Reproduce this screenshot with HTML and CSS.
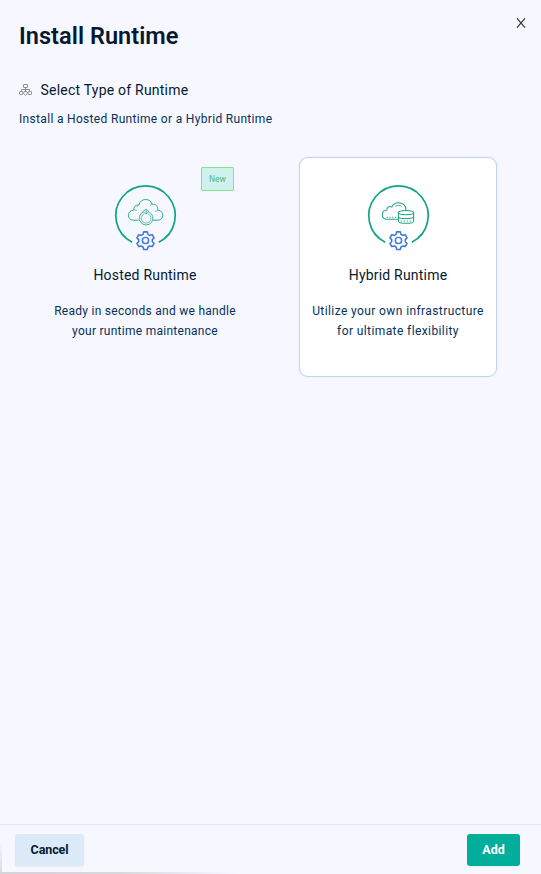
FILE: index.html
```html
<!DOCTYPE html>
<html lang="en">
<head>
<meta charset="utf-8">
<title>Install Runtime</title>
<link rel="stylesheet" href="styles.css">
</head>
<body>
<svg width="0" height="0" class="defs">
  <defs>
    <g id="frame">
      <path d="M27.2 67.2A29.7 29.7 0 1 1 53.8 67.2" fill="none" stroke="#12a584" stroke-width="1.7"/>
      <g transform="translate(40.5 65.5) scale(.92)">
        <path d="M-2-9.4h4l.7 2.7 2 1.1 2.6-.7 2 3.4-1.9 1.9v2.3l1.9 1.9-2 3.4-2.6-.7-2 1.1-.7 2.7h-4l-.7-2.7-2-1.1-2.6.7-2-3.4 1.9-1.9v-2.3l-1.9-1.9 2-3.4 2.6.7 2-1.1z" fill="none" stroke="#3f78d8" stroke-width="1.7" stroke-linejoin="round"/>
        <circle r="3.4" fill="none" stroke="#3f78d8" stroke-width="1.6"/>
      </g>
    </g>
  </defs>
</svg>
<div class="panel">
  <header class="header">
    <h1 class="title">Install Runtime</h1>
    <button class="close" aria-label="Close"><svg width="10" height="10" viewBox="0 0 10 10"><path d="M1 .3L9 9.7M9 .3L1 9.7" stroke="#2c3c4d" stroke-width="1.15"/></svg></button>
  </header>
  <main class="content">
    <h2 class="subtitle">
      <svg width="13" height="12" viewBox="0 0 13 12" fill="none" stroke="#858e9b" stroke-width="1"><rect x="4.5" y=".5" width="4" height="3" rx=".4"/><rect x=".5" y="7.5" width="3.4" height="3" rx=".6"/><rect x="9.1" y="7.5" width="3.4" height="3" rx=".6"/><path d="M5.3 7.5h2.4l.8 1.8-2 2-2-2zM6.5 3.5v4M2.5 7.5v-2h8v2"/></svg>
      <span>Select Type of Runtime</span>
    </h2>
    <p class="intro">Install a Hosted Runtime or a Hybrid Runtime</p>
    <div class="cards">
      <section class="card">
        <span class="badge">New</span>
        <svg class="art" width="80" height="80" viewBox="0 0 80 80">
          <use href="#frame"/>
          <g fill="none" stroke="#2aae90" stroke-width="1" stroke-linecap="round">
            <path d="M33.2 45.2H28.5C25.2 45.2 23.4 43 23.4 40.3c0-3 2.2-5 5.3-5.2-.2-3.2 1.8-5.3 5.2-5.2 1-3.5 3.5-5.4 6.7-5.4 3.4 0 5.6 1.8 6.5 4.7 4-.4 6 2.2 5.7 6.1 3.3.2 5 2.3 5 5 0 2.8-2 4.9-5 4.9h-4.3"/>
            <path d="M29.5 34.8l1.8.5M32 31.6l1.2-.9M46.5 29.5l-1 .7M52 35.7l-1.8.6" stroke-width=".7"/>
            <path d="M37.8 37a6.9 6.9 0 1 0 6.6 0" stroke-width=".9"/>
            <path d="M38.7 38.9a4.9 4.9 0 1 0 4.8 0" stroke-width=".7"/>
            <path d="M38.2 36.3l2.9-2.2 2.9 2.3-2.7 2.5zM41.1 34.5v4.2" stroke-width=".8"/>
          </g>
        </svg>
        <h3 class="name hosted">Hosted Runtime</h3>
        <p class="text ready">Ready in seconds and we handle<br>your runtime maintenance</p>
      </section>
      <section class="card selected">
        <svg class="art" width="80" height="80" viewBox="0 0 80 80">
          <use href="#frame"/>
          <g fill="none" stroke="#20a486" stroke-width="1.05" stroke-linecap="round">
            <path d="M39.5 44.2H29c-3.1 0-4.7-2-4.7-4.5 0-2.7 1.7-4.4 4.4-4.5.3-3.1 2.5-4.3 5.1-3.2 1.2-2.8 3.5-4.2 6.5-4.2 4.7 0 7.5 2.7 7.8 7.3"/>
            <path d="M37.3 31.2c2-1.4 4.8-1.3 6.2.4" stroke-width=".8"/>
            <path d="M29 42.3h10" stroke-dasharray=".5 2.3" stroke-width="1"/>
            <ellipse cx="48" cy="37.6" rx="7.6" ry="2.1" fill="#fff"/>
            <path d="M40.4 37.6v8.6c0 2.7 15.2 2.7 15.2 0v-8.6M40.4 41.7c0 2.5 15.2 2.5 15.2 0"/>
            <path d="M43 45.9h10" stroke-dasharray=".5 2.5"/>
          </g>
        </svg>
        <h3 class="name hybrid">Hybrid Runtime</h3>
        <p class="text utilize">Utilize your own infrastructure<br>for ultimate flexibility</p>
      </section>
    </div>
  </main>
  <footer class="footer">
    <button class="btn cancel">Cancel</button>
    <button class="btn add">Add</button>
  </footer>
</div>
</body>
</html>
```
FILE: styles.css
```css
* { box-sizing: border-box; }
body { margin: 0; background: #f6f7ff; font-family: Roboto, "Liberation Sans", sans-serif; color: #051a2e; }
h1, h2, h3, p { margin: 0; }
button { border: 0; padding: 0; font-family: inherit; }
.defs { position: absolute; }
.panel { height: 874px; display: flex; flex-direction: column; }
.header { height: 72px; display: flex; justify-content: space-between; padding: 18px 15px 0 19px; }
.title { font-size: 23.5px; line-height: 36px; letter-spacing: .05px; font-weight: 600; }
.close { width: 10px; height: 10px; background: none; display: flex; }
.content { flex: 1; }
.subtitle { display: flex; align-items: center; gap: 8.5px; height: 36px; padding-left: 19px; font-size: 14px; font-weight: 450; letter-spacing: .22px; }
.intro { padding: 1px 0 0 19px; line-height: 20px; font-size: 12px; letter-spacing: .32px; font-weight: 450; color: #06315a; }
.cards { display: flex; gap: 55px; margin: 28px 0 0 46px; }
.card { position: relative; width: 198px; height: 220px; border: 1px solid transparent; border-radius: 9px; padding-top: 17px; text-align: center; }
.selected { background: #fff; border-color: #c5d5e7; box-shadow: 0 0 2px #d6e3ef; }
.badge { position: absolute; top: 9px; left: 154px; width: 33px; height: 24px; border: 1px solid #83e68e; border-radius: 1px; background: #d1f1ef; color: #50b780; font-size: 8.5px; line-height: 23px; font-weight: 450; }
.art { display: block; margin-left: 58px; }
.name { height: 20px; margin-top: 10px; font-size: 14px; line-height: 20px; font-weight: 450; letter-spacing: .2px; }
.text { margin-top: 16px; font-size: 12px; line-height: 20px; font-weight: 450; color: #06315a; white-space: nowrap; }
.ready { letter-spacing: .27px; }
.utilize { letter-spacing: .4px; }
.footer { height: 50px; border-top: 1px solid #dae7f5; padding: 9px 21px 0 15px; display: flex; justify-content: space-between; background: linear-gradient(90deg, #d4d5da 0, #d7d8dd 50%, #f6f7ff) 0 100% / 235px 2px no-repeat, linear-gradient(#f6f7ff, #d8d9de) 0 100% / 2px 32px no-repeat; }
.btn { height: 32px; padding-bottom: 1px; border-radius: 3px; font-size: 12.5px; font-weight: 700; box-shadow: 0 1px 2px #0000000c; }
.cancel { width: 69px; background: #dce9f7; color: #051a2e; letter-spacing: -.1px; }
.add { width: 53px; background: #00ae9b; color: #fff; }
```
